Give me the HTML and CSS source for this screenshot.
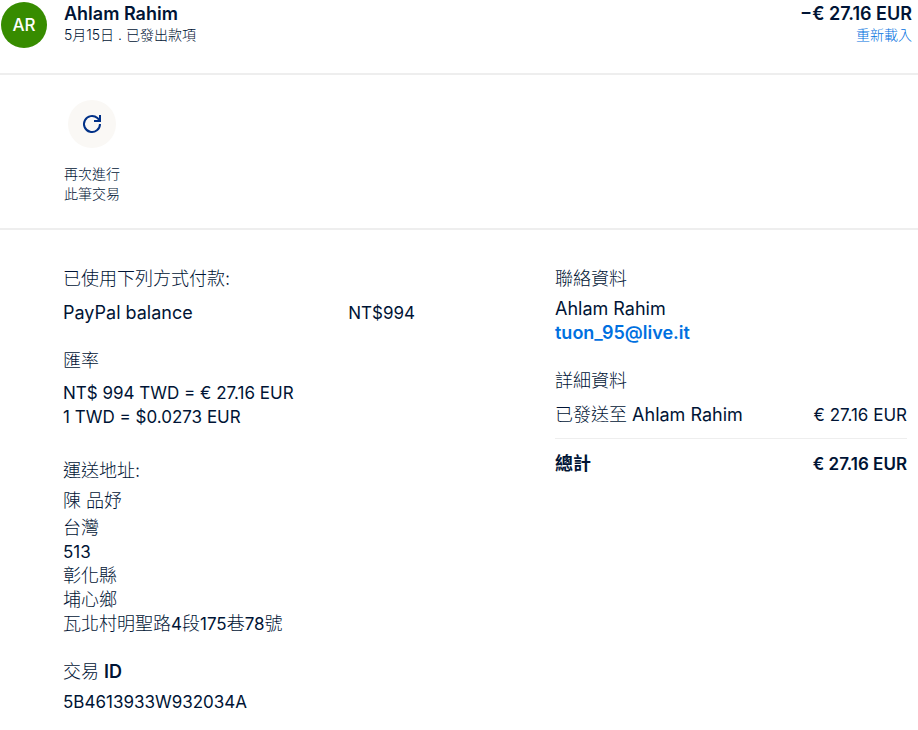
FILE: index.html
```html
<!DOCTYPE html>
<html lang="zh-Hant">

<head>
    <meta charset="UTF-8">
    <meta name="viewport" content="width=device-width, initial-scale=1.0">
    <title>Ahlam Rahim</title>
    <link rel="stylesheet" href="styles.css">
</head>

<body>
    <header class="summary">
        <div class="avatar">AR</div>
        <div class="summary-text">
            <h1 class="name">Ahlam Rahim</h1>
            <p class="small">5月15日 . 已發出款項</p>
        </div>
        <div class="summary-amount">
            <p class="amount">−€ 27.16 EUR</p>
            <a class="small reload" href="#">重新載入</a>
        </div>
    </header>

    <div class="actions">
        <button class="repeat" type="button">
            <span class="repeat-icon">
                <svg width="24" height="24" viewBox="0 0 24 24" fill="none" stroke="#003087" stroke-width="2">
                    <path d="M20 12a8 8 0 1 1-2.6-5.9L20 8.6" />
                    <path d="M20 3v6h-6" />
                </svg>
            </span>
            <span class="small">再次進行<br>此筆交易</span>
        </button>
    </div>

    <main class="details">
        <div class="column">
            <section class="payment">
                <h2>已使用下列方式付款:</h2>
                <div class="row">
                    <span>PayPal balance</span>
                    <span class="figure">NT$994</span>
                </div>
            </section>
            <section class="rate">
                <h2>匯率</h2>
                <p class="figure">NT$ 994 TWD = € 27.16 EUR</p>
                <p class="figure">1 TWD = $0.0273 EUR</p>
            </section>
            <section class="shipping">
                <h2>運送地址:</h2>
                <p class="recipient">陳 品妤</p>
                <address>台灣<br><span class="figure">513</span><br>彰化縣<br>埔心鄉<br>瓦北村明聖路<span class="figure">4</span>段<span class="figure">175</span>巷<span class="figure">78</span>號</address>
            </section>
            <section>
                <h2>交易 <b>ID</b></h2>
                <p class="figure">5B4613933W932034A</p>
            </section>
        </div>

        <div class="column">
            <section>
                <h2>聯絡資料</h2>
                <p>Ahlam Rahim</p>
                <p><a class="email" href="mailto:tuon_95@live.it">tuon_95@live.it</a></p>
            </section>
            <section class="payment">
                <h2>詳細資料</h2>
                <div class="row">
                    <span><span class="light">已發送至</span> Ahlam Rahim</span>
                    <span class="figure">€ 27.16 EUR</span>
                </div>
                <div class="row total">
                    <span>總計</span>
                    <span class="figure">€ 27.16 EUR</span>
                </div>
            </section>
        </div>
    </main>
</body>

</html>
```
FILE: styles.css
```css
* {
    box-sizing: border-box;
}

body {
    margin: 0;
    background-color: #fff;
    color: #001435;
    font-family: Inter, "Noto Sans CJK TC", sans-serif;
    font-size: 18px;
    line-height: 24px;
}

h1,
h2,
p {
    margin: 0;
    font-size: 18px;
}

a {
    color: #0070e0;
    text-decoration: none;
}

.small {
    font-size: 14px;
    font-weight: 300;
    line-height: 20px;
}

.figure {
    font-size: 17px;
    font-weight: 400;
}

/* Header */
.summary {
    display: flex;
    padding: 2px 6px 25px 1px;
    border-bottom: 2px solid #eee;
}

.avatar {
    display: flex;
    align-items: center;
    justify-content: center;
    width: 46px;
    height: 46px;
    margin-right: 17px;
    border-radius: 50%;
    background-color: #378c00;
    color: #fff;
    font-size: 17px;
    font-weight: 500;
}

.summary-text {
    flex: 1;
}

.summary-amount {
    text-align: right;
}

.name,
.amount {
    font-weight: 600;
}

.summary .small {
    display: block;
    line-height: 18px;
}

/* Repeat button */
.actions {
    padding: 25px 64px 24px;
    border-bottom: 2px solid #eee;
}

.repeat {
    display: flex;
    flex-direction: column;
    align-items: center;
    gap: 16px;
    padding: 0;
    border: 0;
    background: none;
    color: inherit;
    font-family: inherit;
    cursor: pointer;
}

.repeat-icon {
    display: flex;
    align-items: center;
    justify-content: center;
    width: 48px;
    height: 48px;
    border-radius: 50%;
    background-color: #faf8f5;
}

/* Transaction details */
.details {
    display: grid;
    grid-template-columns: 1fr 1fr;
    gap: 140px;
    padding: 37px 11px 16px 63px;
}

.column {
    display: flex;
    flex-direction: column;
    gap: 24px;
}

h2 {
    margin-bottom: 6px;
    font-weight: 300;
}

.payment h2 {
    margin-bottom: 10px;
}

.rate h2 {
    margin-bottom: 8px;
}

.rate {
    margin-bottom: 6px;
}

.recipient {
    margin-bottom: 3px;
}

.recipient,
.light,
address {
    font-style: normal;
    font-weight: 300;
}

.row {
    display: flex;
    justify-content: space-between;
}

.total {
    margin-top: 11px;
    padding-top: 13px;
    border-top: 1px solid #eee;
}

b,
.email,
.total,
.total .figure {
    font-weight: 600;
}
```
